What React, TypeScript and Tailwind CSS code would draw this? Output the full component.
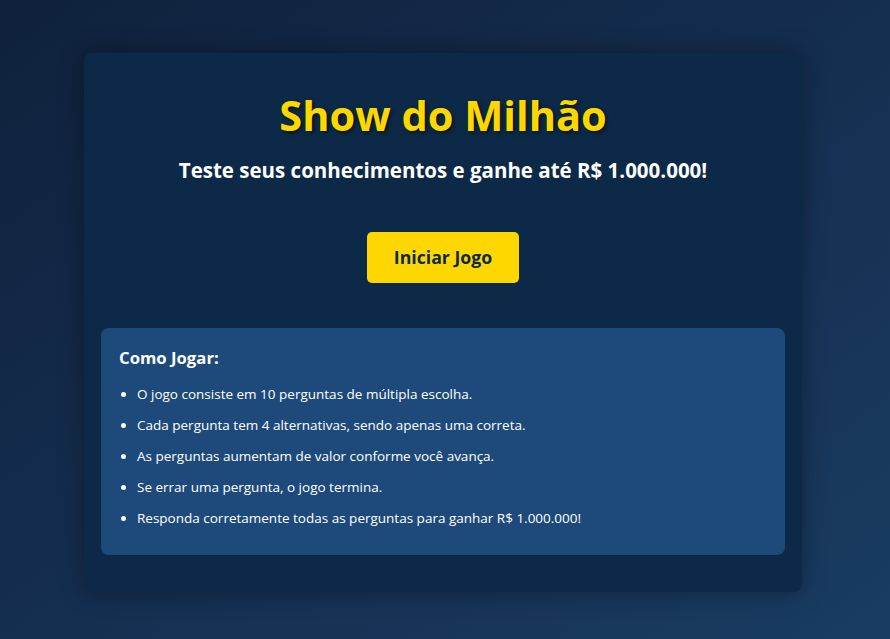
const rules = [
  "O jogo consiste em 10 perguntas de múltipla escolha.",
  "Cada pergunta tem 4 alternativas, sendo apenas uma correta.",
  "As perguntas aumentam de valor conforme você avança.",
  "Se errar uma pergunta, o jogo termina.",
  "Responda corretamente todas as perguntas para ganhar R$ 1.000.000!",
];

export default function App() {
  return (
    <div
      className="min-h-screen w-full bg-gradient-to-br from-[#0f213c] to-[#1a3c63] pt-[53px] pb-[48px] font-['Open_Sans',sans-serif]"
    >
      <div className="ml-[84px] w-[718px] rounded-lg bg-[#0c2a47] px-[17px] pt-[36px] pb-[37px] shadow-[0_0_24px_rgba(0,0,0,0.35)]">
        <h1 className="text-center text-[41.5px] font-bold leading-[52px] text-[#ffd700] [text-shadow:2px_2px_4px_rgba(0,0,0,0.5)]">
          Show do Milhão
        </h1>
        <p className="mt-[14px] text-center text-[20.5px] font-bold leading-[30px] text-white">
          Teste seus conhecimentos e ganhe até R$ 1.000.000!
        </p>
        <div className="mt-[47px] flex justify-center">
          <button className="h-[51px] w-[152px] rounded-[5px] bg-[#ffd700] text-[17.7px] font-bold text-[#0c2a47]">
            Iniciar Jogo
          </button>
        </div>
        <div className="mt-[45px] rounded-lg bg-[#1e4a7b] px-[18px] pt-[20px] pb-[27px] text-white">
          <h3 className="text-[16.7px] font-bold leading-[20px]">Como Jogar:</h3>
          <ul className="mt-[17px] flex flex-col gap-[12px] pl-[18px] list-disc text-[13.5px] leading-[19px]">
            {rules.map((r) => (
              <li key={r}>{r}</li>
            ))}
          </ul>
        </div>
      </div>
    </div>
  );
}
